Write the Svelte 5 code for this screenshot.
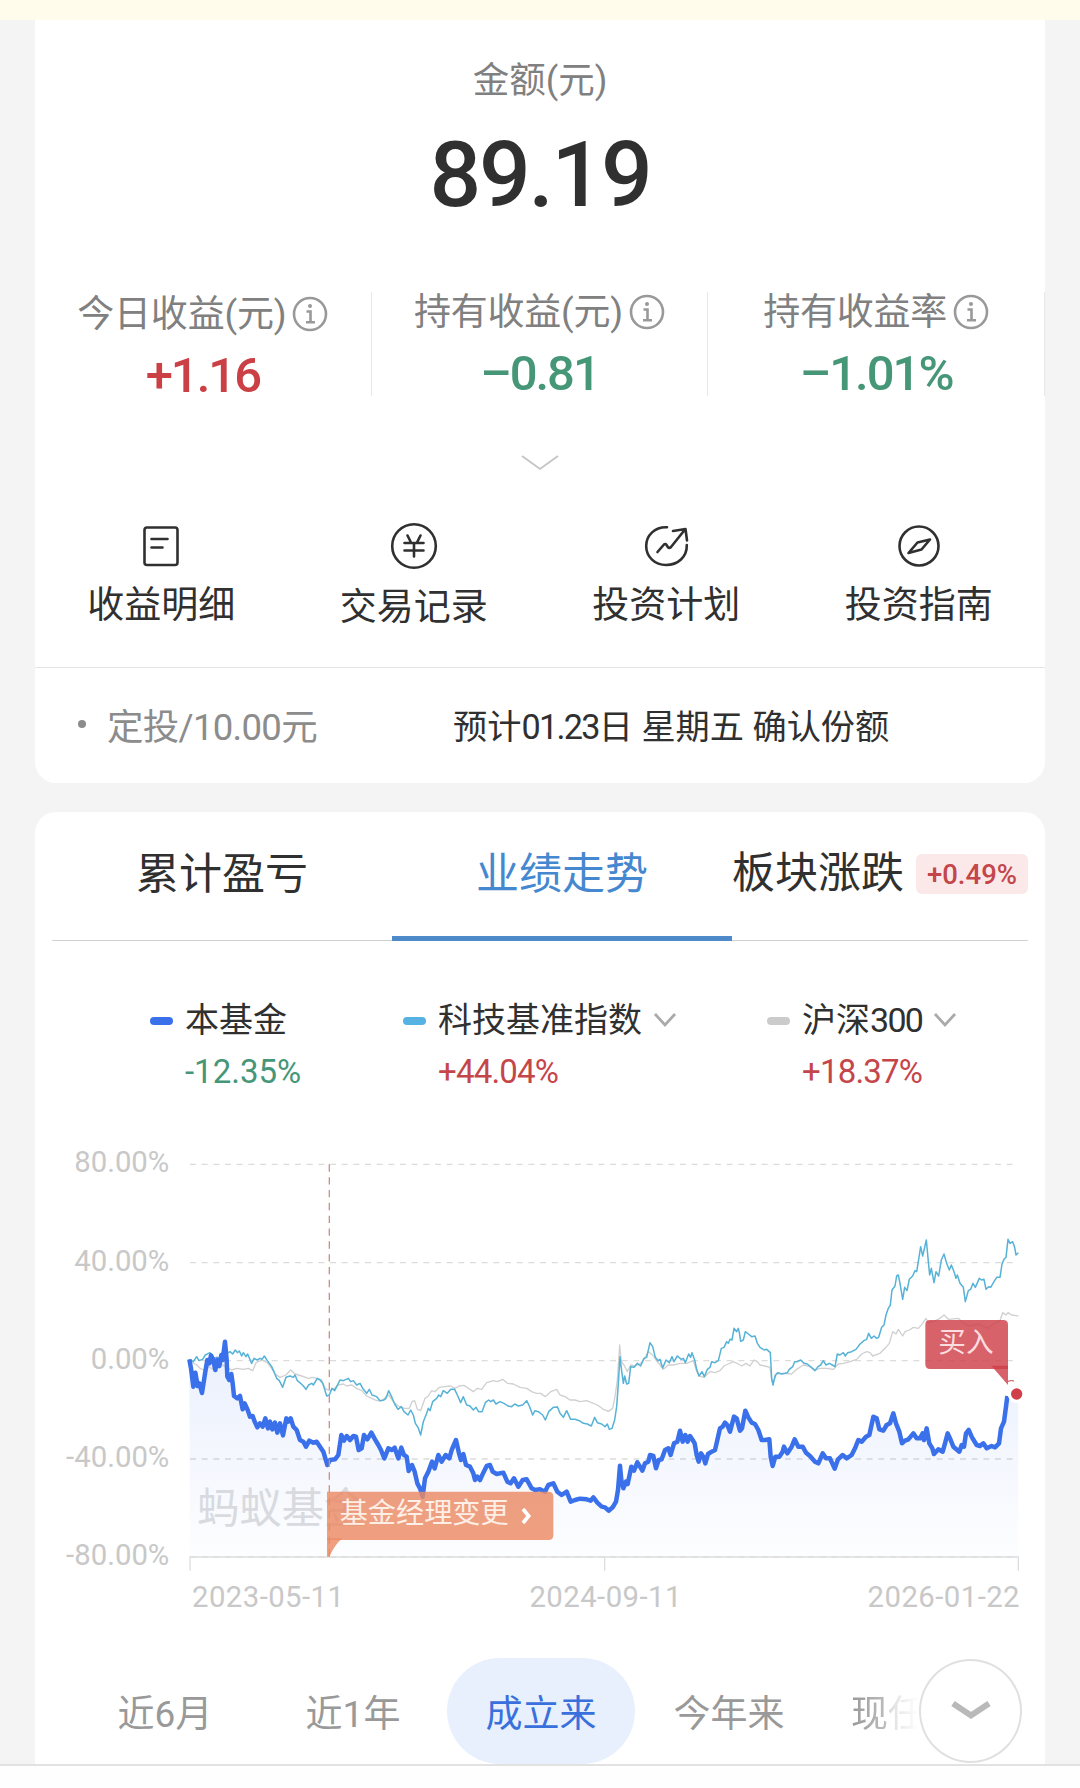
<script lang="ts">
	type Point = [number, number];

	interface Stat {
		label: string;
		value: string;
		tone: 'up' | 'down';
	}

	interface Legend {
		name: string;
		code?: string;
		value: string;
		tone: 'up' | 'down';
		color: string;
		selectable: boolean;
	}

	const stats: Stat[] = [
		{ label: '今日收益(元)', value: '+1.16', tone: 'up' },
		{ label: '持有收益(元)', value: '–0.81', tone: 'down' },
		{ label: '持有收益率', value: '–1.01%', tone: 'down' }
	];

	const actions = [
		{ icon: 'detail', label: '收益明细' },
		{ icon: 'record', label: '交易记录' },
		{ icon: 'plan', label: '投资计划' },
		{ icon: 'guide', label: '投资指南' }
	];

	const legends: Legend[] = [
		{ name: '本基金', value: '-12.35%', tone: 'down', color: '#3a70ea', selectable: false },
		{ name: '科技基准指数', value: '+44.04%', tone: 'up', color: '#56b2e2', selectable: true },
		{ name: '沪深', code: '300', value: '+18.37%', tone: 'up', color: '#cbcbcb', selectable: true }
	];

	const ticks = [
		{ label: '80.00%', y: 43 },
		{ label: '40.00%', y: 338 },
		{ label: '0.00%', y: 632 },
		{ label: '-40.00%', y: 927 },
		{ label: '-80.00%', y: 1221 }
	];

	const periods = ['近6月', '近1年', '成立来', '今年来', '现任'];
	let period = $state('成立来');

	// samples are stored in runs, each relative to its own origin
	function run(dx: number, dy: number, samples: string): Point[] {
		return samples.split(' ').map((s) => {
			const [x, y] = s.split(',').map(Number);
			return [x + dx, y + dy];
		});
	}

	function toPath(points: Point[]): string {
		return 'M' + points.map((p) => p.join(' ')).join('L');
	}

	const fund = [
		...run(0, 0, '28,628 33,655 40,710 46,668 53,708 58,700 66,729 76,665 82,630 88,640 93,616 99,628 106,660 112,630 118,648 124,615 128,630 135,575 140,630 142,680 148,690 154,672 158,700 162,738 172,745 180,738 188,778 194,760 203,780 210,800 218,798 224,815 232,832 240,820 248,830 256,805 264,835 270,815 277,838 285,818 292,848 300,820 309,856 319,805 325,815 332,805 340,830 350,840 360,870 370,875 378,890 388,872 400,878 410,875 420,890 430,905 442,945 450,930 465,928 475,915 484,855 492,872 500,858 510,870 520,858 528,860 536,900 545,895 552,855 562,868 574,848 585,868 595,885 603,900 613,925 625,895 635,900 644,893 655,925 664,893 672,915 680,920 686,963 696,945 704,965 712,1000 720,1015 728,1040 735,985 745,965 756,935 764,955 775,915 785,935 797,915 808,925 815,900 828,870 837,910 843,930 850,912 858,945 870,950 880,970'),
		...run(720, 450, '165,540 172,530 180,540 190,518 200,498 210,495 218,515 230,522 250,518 262,545 272,550 282,535 295,560 308,540 320,538 335,565 345,570 360,568 375,575 385,555 400,550 412,575 425,585 440,575 452,605 465,600 480,596 500,598 512,602 520,592 532,608 545,620 555,622 566,632 578,622 588,605 594,570 600,497 604,540 610,565 618,545 623,552 634,500 642,512 652,487 660,500 667,512 675,490 685,485 690,465 700,468 708,505 716,480 725,478 735,450 745,445 752,465 762,430 772,425 780,392 788,425 796,405 803,425 810,408 818,420 824,430 830,465 836,485 843,460 850,470 856,490 864,462 875,455 885,450 892,420 900,385 908,380 915,368 922,375 930,395 942,350 950,355 958,385'),
		...run(1560, 150, '120,692 126,685 136,632 145,652 155,668 165,672 175,690 185,720 195,720 208,718 212,770 218,798 226,770 238,770 248,755 252,740 262,760 275,740 284,718 295,740 308,740 318,758 330,768 345,785 355,790 368,760 378,775 390,775 404,806 414,778 428,765 440,775 455,765 465,745 475,720 485,725 498,710 508,705 520,650 530,655 538,688 550,692 560,675 570,670 580,640 588,670 598,695 606,730 615,722 625,718 640,700 650,715 660,715 668,700 672,720 680,685 688,730 697,745 702,762 715,748 728,755 735,730 743,700 752,720 760,740 778,755 785,735 792,740 798,700 806,690 816,712 830,735 840,738 850,730 860,745 875,738 885,742 897,730 903,685 912,665 918,620 922,588')
	];

	const benchmark = [
		...run(0, 0, '28,628 40,635 50,620 57,632 68,628 76,615 90,608 100,625 112,622 120,625 128,605 136,600 145,608 150,605 158,612 166,600 172,608 178,603 185,618 190,608 198,620 203,612 215,640 222,625 232,630 240,625 246,628 253,618 262,632 275,650 282,665 290,685 298,692 308,712 318,682 330,678 340,682 345,675 352,692 362,700 370,708 378,718 386,705 395,700 400,705 412,685 420,690 428,700 433,715 440,738 448,735 456,715 464,722 475,700 480,690 490,692 505,685 512,695 520,692 530,705 540,700 550,718 560,730 568,718 576,735 590,740 600,752 612,750 618,745 626,722 634,738 644,762 654,778 664,770 672,785 684,795 692,780 700,795 706,820 714,832 722,855 730,815 740,790 745,775 750,782 758,755 770,745 776,735 782,740 790,722 802,730 812,718 824,718 832,735 842,758 850,740 860,765'),
		...run(720, 450, '150,318 160,330 168,322 176,335 186,335 196,308 206,300 212,305 220,300 228,312 240,305 252,310 264,318 275,320 284,312 295,318 308,315 320,302 328,318 338,345 345,332 355,335 368,345 376,360 386,335 400,322 408,322 412,320 420,340 430,352 440,332 452,358 465,358 478,362 490,370 502,372 514,378 524,352 532,368 545,372 555,380 562,372 568,388 576,385 584,360 590,320 595,250 600,170 604,205 610,250 614,228 620,252 626,250 632,200 642,202 652,190 662,198 672,175 680,172 690,128 698,140 706,172 714,182 720,178 728,204 738,180 748,188 756,170 762,185 772,168 784,178 790,175 796,188 806,162 812,172 816,158 824,180 830,208 837,228 846,215 853,230 862,208 870,202 875,185 885,188 895,182 904,145 912,142 920,125 925,130 930,118 936,120 942,85 950,95 955,85'),
		...run(1560, 150, '118,398 122,424 130,420 136,395 145,402 155,410 165,408 172,430 180,442 192,450 200,448 211,458 215,535 219,555 226,525 234,518 245,522 255,520 262,518 268,508 278,500 284,485 292,485 302,480 312,490 322,492 334,502 345,512 354,500 362,495 370,482 378,495 388,490 397,495 405,500 412,462 420,465 430,458 436,468 443,458 455,455 468,448 480,432 492,422 500,418 506,400 514,415 522,408 530,415 536,412 545,382 552,375 558,345 565,325 571,315 576,270 585,258 590,228 595,225 600,250 608,298 614,262 621,272 628,238 638,228 645,212 650,215 656,178 662,140 668,168 679,120 685,185 689,225 694,205 702,248 708,215 716,228 724,180 732,162 740,190 748,210 754,195 762,215 768,235 772,225 780,250 790,262 796,305 805,272 812,268 819,250 826,262 838,235 845,240 852,238 858,268 866,260 872,262 882,245 890,232 900,232 906,192 912,178 918,172 924,118 930,130 938,125 944,142 948,165 955,158')
	];

	const csi300 = [
		...run(0, 0, '28,632 50,645 60,655 72,660 85,650 100,658 120,640 135,650 155,660 170,655 190,658 205,655 218,662 228,638 245,630 262,638 275,655 285,672 300,682 318,675 332,660 345,672 365,678 385,685 400,682 412,686 425,690 435,715 448,722 460,718 475,705 490,702 500,708 515,705 530,715 545,722 560,738 575,745 590,752 605,752 618,740 626,735 640,755 655,768 672,775 688,775 696,755 704,752 712,778 722,782 735,745 745,738 755,722 765,725 778,712 795,710 812,708 825,715 838,708 852,706 870,718'),
		...run(720, 450, '160,275 172,265 185,268 200,248 220,242 232,245 248,238 262,250 280,252 300,262 320,265 335,275 350,280 362,280 376,290 392,275 410,268 420,285 435,290 450,300 465,300 480,305 500,302 515,308 532,315 550,328 565,334 578,325 585,290 592,240 599,135 604,185 612,195 622,215 632,195 645,198 660,192 672,178 685,155 698,165 708,180 720,195 730,208 745,195 760,195 780,190 800,190 820,182 830,215 838,228 852,232 870,215 885,218 900,212 912,198 925,192 940,185 955,192'),
		...run(1560, 150, '125,498 138,490 150,498 162,480 172,485 180,495 195,498 210,502 216,545 222,540 230,522 250,520 275,522 290,508 310,495 330,500 345,510 360,505 380,505 400,508 415,492 430,490 450,485 470,478 485,462 500,455 510,458 518,468 540,460 555,445 568,430 578,395 588,402 595,388 608,408 615,395 628,390 640,382 655,385 668,370 678,355 684,368 700,365 720,355 732,345 745,358 775,355 790,370 810,378 835,372 862,385 880,372 900,362 908,338 918,345 924,338 935,345 955,348')
	];

	const fundPath = toPath(fund);
	const areaPath = fundPath + 'L2515 732V1221H30Z';
</script>

<div class="page">
	<div class="notice"></div>

	<section class="card summary">
		<div class="amount-label">金额(元)</div>
		<div class="amount">89.19</div>

		<div class="stats">
			{#each stats as stat}
				<div class="stat">
					<div class="stat-label">
						<span>{stat.label}</span>
						<svg class="info" viewBox="0 0 36 36">
							<circle cx="18" cy="18" r="16" />
							<path d="M14.5 15.5H18.5V26M14 26.2H23" />
							<circle class="dot" cx="18" cy="10" r="2" />
						</svg>
					</div>
					<div class="stat-value {stat.tone}">{stat.value}</div>
				</div>
			{/each}
		</div>

		<svg class="expand" viewBox="0 0 38 18"><path d="M1 2L19 15L37 2" /></svg>

		<div class="actions">
			{#each actions as action}
				<div class="action">
					<svg class="action-icon" viewBox="0 0 48 48">
						{#if action.icon === 'detail'}
							<rect x="7.5" y="5.5" width="33" height="37.5" rx="2.5" />
							<path d="M14.5 17H30.5M14.5 25.5H25.5" />
						{:else if action.icon === 'record'}
							<circle cx="24" cy="24" r="21.8" />
							<path d="M17.5 13.5L21 20.5M30.5 13.5L27 20.5M14.5 21H33.5M14.5 28.5H33.5M24 21V34.5" />
						{:else if action.icon === 'plan'}
							<path d="M25 5.3C13 4.8 4.2 13 4.2 24C4.2 35 13 43 24 43C36 43 45 35 44.8 23" />
							<path d="M15.5 30L22 22.5C23 21.5 24 22 24.5 23L26 25.3C27 26.3 28 26 29 25L43 7.5M31 9L43.5 7L45 18.5" />
						{:else}
							<circle cx="24" cy="24" r="19.5" />
							<path d="M35 17.5L22.5 20.5L13.5 31L26.5 27.5L35 17.5Z" />
						{/if}
					</svg>
					<span>{action.label}</span>
				</div>
			{/each}
		</div>

		<div class="plan">
			<i class="bullet"></i>
			<span class="plan-name">定投/10.00元</span>
			<span class="plan-text">预计<span class="num">01.23</span>日 星期五 确认份额</span>
		</div>
	</section>

	<section class="card performance">
		<div class="tabs">
			<div class="tab">累计盈亏</div>
			<div class="tab active">业绩走势</div>
			<div class="tab last">板块涨跌<span class="badge">+0.49%</span></div>
		</div>

		<div class="legends">
			{#each legends as item}
				<div class="legend">
					<i class="swatch" style="background: {item.color}"></i>
					<div class="legend-name">
						<span>{item.name}{#if item.code}<span class="num">{item.code}</span>{/if}</span>
						{#if item.selectable}
							<svg class="caret" viewBox="0 0 24 16"><path d="M2 2L12 13L22 2" /></svg>
						{/if}
					</div>
					<div class="legend-value {item.tone}">{item.value}</div>
				</div>
			{/each}
		</div>

		<svg class="chart" viewBox="-435 -60 3030 1500">
			<defs>
				<linearGradient id="fund-area" x1="0" y1="0" x2="0" y2="1">
					<stop offset="0" stop-color="#3a70ea" stop-opacity="0.11" />
					<stop offset="1" stop-color="#3a70ea" stop-opacity="0.01" />
				</linearGradient>
			</defs>

			{#each ticks as tick}
				<line class="grid" x1="30" y1={tick.y} x2="2515" y2={tick.y} />
				<text class="axis" x="-32" y={tick.y + 24} text-anchor="end">{tick.label}</text>
			{/each}
			<path class="axis-line" d="M30 1262V1221H2515V1262M1274 1221V1262" />
			<text class="axis date" x="36" y="1371">2023-05-11</text>
			<text class="axis date" x="1277" y="1371" text-anchor="middle">2024-09-11</text>
			<text class="axis date" x="2520" y="1371" text-anchor="end">2026-01-22</text>

			<path d={areaPath} fill="url(#fund-area)" />
			<text class="watermark" x="51" y="1118">蚂蚁基金</text>

			<path class="line csi" d={toPath(csi300)} />
			<path class="line bench" d={toPath(benchmark)} />
			<path class="line fund" d={fundPath} />
			<line class="event" x1="448" y1="43" x2="448" y2="1221" />

			<g class="manager-tag">
				<path d="M441 1025H1106Q1120 1025 1120 1039V1156Q1120 1170 1106 1170H441Z" />
				<path d="M441 1165H487Q466 1182 448 1220H441Z" />
			</g>
			<text class="tag-text" x="479" y="1119">基金经理变更</text>
			<path class="tag-arrow" d="M1029 1077L1046 1098L1029 1119" />

			<g class="buy-tag">
				<path d="M2250 510H2470Q2484 510 2484 524V657H2250Q2236 657 2236 643V524Q2236 510 2250 510Z" />
				<path d="M2434 647H2484V705Z" />
			</g>
			<text class="tag-text buy" x="2275" y="605">买入</text>
			<path class="spark" d="M2484 694Q2494 690 2502 693" />
			<circle class="halo" cx="2510" cy="732" r="27" />
			<circle class="last-dot" cx="2510" cy="732" r="17" />
		</svg>

		<div class="periods">
			{#each periods as name}
				<button class="period" class:selected={name === period} onclick={() => (period = name)}>{name}</button>
			{/each}
			<div class="more">
				<svg viewBox="0 0 40 24"><path d="M2 4.5L20 16.5L38 4.5" /></svg>
			</div>
		</div>
	</section>

	<div class="bottom-bar"></div>
</div>

<style>
	:global(body) {
		background: #f4f4f4;
	}

	.page {
		width: 1080px;
		height: 1788px;
		overflow: hidden;
		display: flex;
		flex-direction: column;
		background: #f4f4f4;
		color: #303030;
		font-family: Roboto, 'Noto Sans CJK SC', sans-serif;
	}

	.notice {
		flex: none;
		height: 20px;
		background: #fffcec;
	}

	.card {
		flex: none;
		box-sizing: border-box;
		margin: 0 35px;
		background: #fff;
	}

	.num {
		letter-spacing: -1.7px;
	}

	.summary {
		height: 763px;
		border-radius: 0 0 21px 21px;
		display: flex;
		flex-direction: column;
		align-items: center;
	}

	.amount-label {
		margin-top: 36px;
		font-size: 36.5px;
		line-height: 50px;
		color: #808080;
	}

	.amount {
		margin-top: 19px;
		height: 100px;
		font-size: 91px;
		line-height: 100px;
		font-weight: 500;
		letter-spacing: -2.2px;
	}

	.stats {
		align-self: stretch;
		display: grid;
		grid-template-columns: repeat(3, 1fr);
		margin-top: 67px;
		height: 104px;
	}

	.stat {
		border-right: 1px solid #e9e9e9;
		display: flex;
		flex-direction: column;
		align-items: center;
	}

	.stat:first-child {
		padding-top: 2px;
	}

	.stat-label {
		display: flex;
		align-items: center;
		gap: 6px;
		height: 40px;
		font-size: 37px;
		line-height: 40px;
		color: #808080;
		white-space: nowrap;
	}

	.stat-label span {
		padding-top: 1px;
		letter-spacing: -0.2px;
	}

	.info {
		width: 36px;
		height: 36px;
		fill: none;
		stroke: #999;
		stroke-width: 2.6;
	}

	.info .dot {
		fill: #999;
		stroke: none;
	}

	.stat-value {
		margin-top: 22px;
		font-size: 49px;
		line-height: 40px;
		font-weight: 500;
		letter-spacing: -2px;
	}

	.up {
		color: #c5464a;
	}

	.down {
		color: #469678;
	}

	.stat-value.up {
		color: #cb4044;
	}

	.expand {
		width: 38px;
		height: 18px;
		margin-top: 58px;
		fill: none;
		stroke: #c4c4c4;
		stroke-width: 1.8;
	}

	.actions {
		align-self: stretch;
		display: grid;
		grid-template-columns: repeat(4, 1fr);
		margin-top: 50px;
		height: 145px;
		border-bottom: 1px solid #e5e5e5;
	}

	.action {
		display: flex;
		flex-direction: column;
		align-items: center;
		gap: 11px;
		font-size: 37px;
		line-height: 50px;
	}

	.action:nth-child(2) {
		gap: 13px;
	}

	.action-icon {
		width: 48px;
		height: 48px;
		fill: none;
		stroke: #303030;
		stroke-width: 2.6;
		stroke-linecap: round;
		stroke-linejoin: round;
	}

	.plan {
		align-self: stretch;
		flex: 1;
		display: flex;
		align-items: center;
		padding: 0 0 3px 43px;
	}

	.bullet {
		width: 8px;
		height: 8px;
		border-radius: 50%;
		background: #8c8c8c;
	}

	.plan-name {
		width: 346px;
		margin-left: 21px;
		font-size: 36.5px;
		letter-spacing: -0.7px;
		color: #8c8c8c;
	}

	.plan-text {
		font-size: 34.2px;
		white-space: pre;
	}

	.performance {
		margin-top: 29px;
		height: 952px;
		border-radius: 21px 21px 0 0;
	}

	.tabs {
		display: flex;
		height: 129px;
		margin: 0 17px;
		box-sizing: border-box;
		border-bottom: 1px solid #d2d2d2;
		font-size: 43px;
		line-height: 125px;
	}

	.tab {
		box-sizing: border-box;
		width: 340px;
		text-align: center;
		white-space: nowrap;
	}

	.tab.active {
		height: 129px;
		border-bottom: 5px solid #4e8aca;
		color: #4688cf;
	}

	.tab.last {
		width: 296px;
		height: 123px;
		display: flex;
		align-items: center;
	}

	.badge {
		width: 112px;
		height: 40px;
		margin-left: auto;
		border-radius: 6px;
		background: #fbe9e9;
		color: #c3464b;
		font-size: 27.5px;
		line-height: 42px;
		font-weight: 500;
	}

	.legends {
		display: grid;
		grid-template-columns: 253px 364px 1fr;
		height: 189px;
		padding: 58px 0 0 115px;
		box-sizing: border-box;
	}

	.legend {
		display: grid;
		grid-template-columns: 23px 1fr;
		grid-template-rows: 43px 50px;
		column-gap: 12px;
		align-items: center;
		font-size: 34px;
	}

	.swatch {
		height: 8px;
		border-radius: 4px;
	}

	.legend-name {
		display: flex;
		align-items: center;
		gap: 11px;
		line-height: 40px;
		padding-bottom: 1px;
		white-space: nowrap;
	}

	.legend-value {
		grid-column: 2;
		font-size: 33px;
		padding-top: 8px;
	}

	.legend-value.up {
		letter-spacing: -0.8px;
	}

	.caret {
		width: 24px;
		height: 16px;
		fill: none;
		stroke: #aaa;
		stroke-width: 2.8;
	}

	.chart {
		display: block;
		width: 1010px;
		height: 500px;
	}

	.grid {
		stroke: #dcdcdc;
		stroke-width: 4;
		stroke-dasharray: 18 17;
	}

	.axis {
		font-size: 88px;
		fill: #c8c8c8;
	}

	.axis.date {
		letter-spacing: 1.3px;
	}

	.axis-line {
		fill: none;
		stroke: #dedede;
		stroke-width: 4;
	}

	.watermark {
		font-size: 127px;
		fill: #d8dae0;
	}

	.line {
		fill: none;
		stroke-linejoin: round;
	}

	.csi {
		stroke: #d0d0d0;
		stroke-width: 4;
	}

	.bench {
		stroke: #56b2d6;
		stroke-width: 4.5;
	}

	.fund {
		stroke: #3a70ea;
		stroke-width: 13.5;
	}

	.event {
		stroke: #cf9080;
		stroke-width: 4;
		stroke-dasharray: 22 16.5;
	}

	.manager-tag {
		fill: #ec8a64;
		fill-opacity: 0.82;
	}

	.buy-tag {
		fill: #d04048;
		fill-opacity: 0.82;
	}

	.tag-text {
		font-size: 84.5px;
		fill: #fdeee6;
	}

	.tag-text.buy {
		font-size: 83px;
		fill: #fbdde0;
	}

	.tag-arrow {
		fill: none;
		stroke: #fff;
		stroke-width: 11;
	}

	.spark {
		fill: none;
		stroke: #d04048;
		stroke-width: 3;
	}

	.halo {
		fill: #fff;
	}

	.last-dot {
		fill: #d0404a;
	}

	.periods {
		position: relative;
		display: flex;
		height: 106px;
		margin-top: 28px;
		padding-left: 36px;
	}

	.period {
		flex: none;
		width: 188px;
		padding: 0;
		border: 0;
		border-radius: 53px;
		background: none;
		font: inherit;
		font-size: 37px;
		color: #999;
	}

	.period.selected {
		background: #e8f0fe;
		color: #3a70dc;
	}

	.period:nth-child(5) {
		width: 102px;
		padding-left: 28px;
		border-radius: 0;
		text-align: left;
		color: transparent;
		background: linear-gradient(90deg, #999 28px, #bbb 62px, #e0e0e0 68px, #fff 96px);
		background-clip: text;
	}

	.more {
		position: absolute;
		left: 884px;
		top: 1px;
		box-sizing: border-box;
		width: 103px;
		height: 104px;
		border: 2px solid #e0e0e0;
		border-radius: 50%;
		background: #fff;
		display: grid;
		place-items: center;
	}

	.more svg {
		width: 40px;
		height: 24px;
		fill: none;
		stroke: #b9b9b9;
		stroke-width: 6;
	}

	.bottom-bar {
		flex: 1;
		border-top: 2px solid #e2e2e2;
		background: #fefefe;
	}
</style>
